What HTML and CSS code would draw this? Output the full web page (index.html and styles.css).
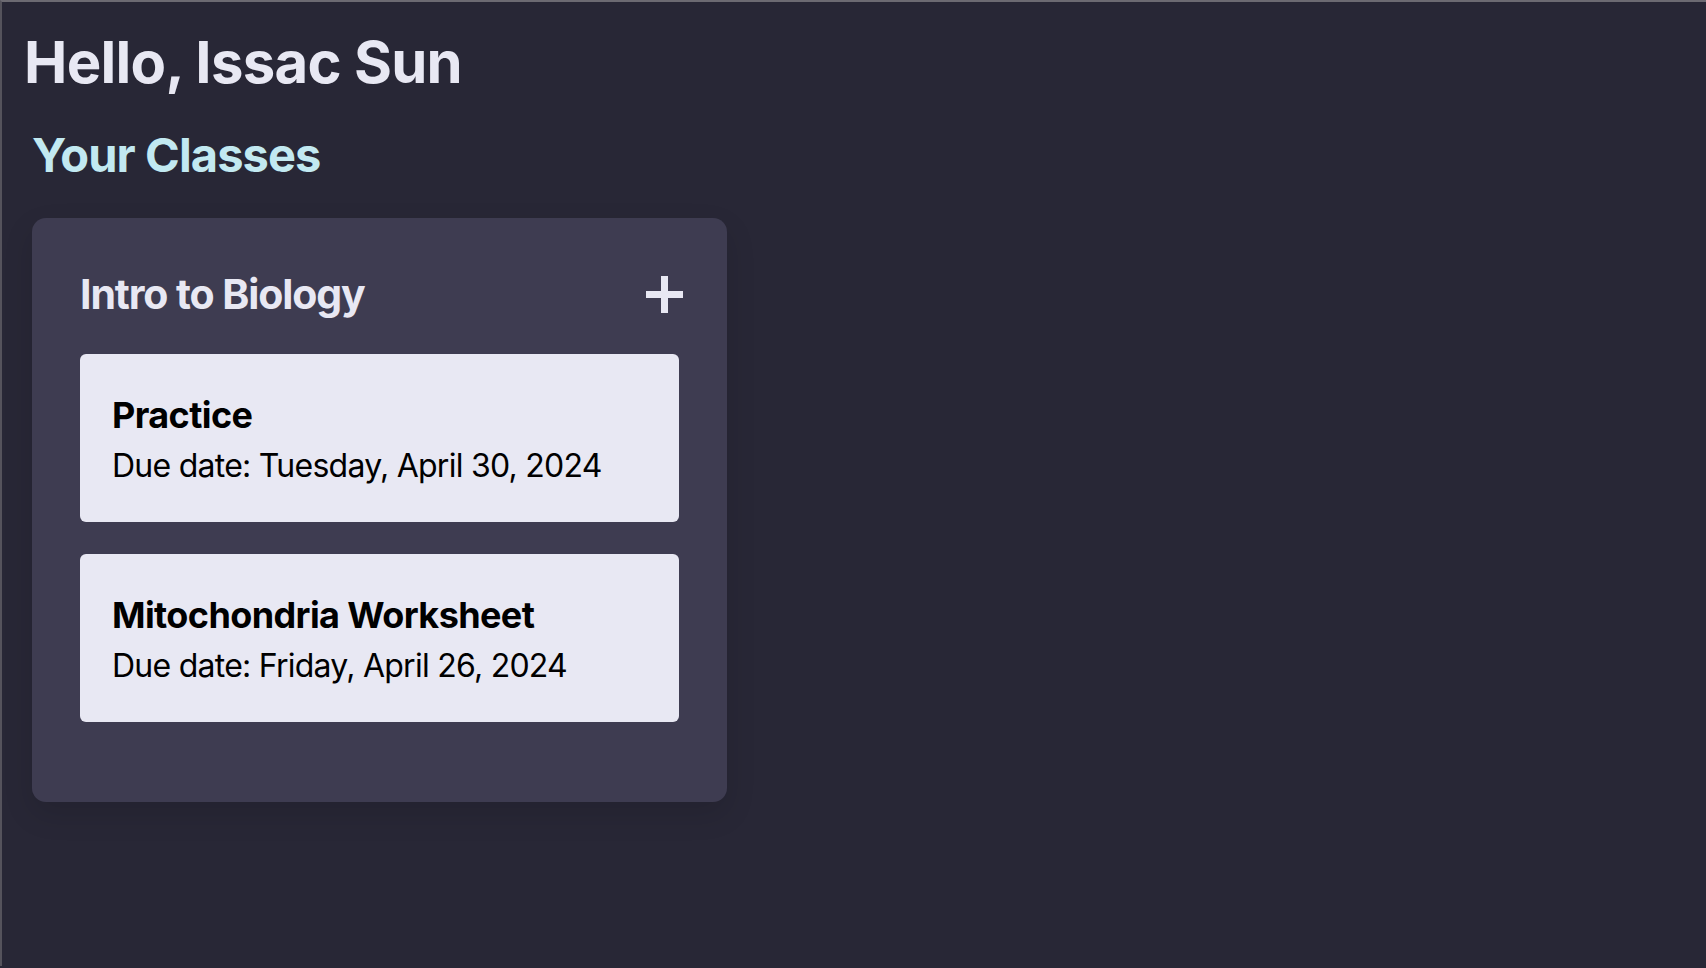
FILE: index.html
```html
<!DOCTYPE html>
<html lang="en">
  <head>
    <meta charset="UTF-8" />
    <meta name="viewport" content="width=device-width, initial-scale=1.0" />
    <title>Dashboard</title>
    <link rel="stylesheet" href="styles.css">
  </head>
  <body>
    <h1 class="greeting">Hello, Issac Sun</h1>

    <div class="classes">
      <h2 class="classes-title">Your Classes</h2>

      <div class="class-card">
        <div class="class-header">
          <h3 class="class-name">Intro to Biology</h3>
          <button type="button" class="add-button" aria-label="Add assignment">
            <svg width="37" height="37" viewBox="0 0 37 37">
              <rect x="15" y="0" width="7" height="37" fill="currentColor" />
              <rect x="0" y="15" width="37" height="7" fill="currentColor" />
            </svg>
          </button>
        </div>

        <div class="assignment">
          <h4 class="assignment-name">Practice</h4>
          <p class="due-date">Due date: Tuesday, April 30, 2024</p>
        </div>

        <div class="assignment">
          <h4 class="assignment-name">Mitochondria Worksheet</h4>
          <p class="due-date">Due date: Friday, April 26, 2024</p>
        </div>
      </div>
    </div>
  </body>
</html>
```

FILE: styles.css
```css
html {
  background-color: #282736;
}
body {
  margin: 0;
  min-height: 966px;
  background-color: #282736;
  border-top: 2px solid #6c6a72;
  border-left: 2px solid #55535c;
  font-family: Inter, "Noto Sans", sans-serif;
  color: #e8e8f3;
  box-sizing: border-box;
}
.greeting {
  margin: 25px 0 0 22px;
  font-size: 58px;
  font-weight: 700;
  letter-spacing: -0.7px;
  line-height: normal;
}
.classes {
  padding-left: 30px;
}
.classes-title {
  margin: 29px 0 35px 0;
  font-size: 47px;
  font-weight: 700;
  letter-spacing: -0.9px;
  line-height: normal;
  color: #c2e9f1;
}
.class-card {
  width: 695px;
  box-sizing: border-box;
  padding: 51px 48px 80px 48px;
  background-color: #3e3c51;
  border-radius: 14px;
  box-shadow: 0 12px 30px rgba(0, 0, 0, 0.12);
}
.class-header {
  display: flex;
  align-items: center;
  justify-content: space-between;
  margin-bottom: 35px;
}
.class-name {
  margin: 0;
  font-size: 41px;
  font-weight: 700;
  letter-spacing: -1.1px;
  line-height: normal;
}
.add-button {
  display: flex;
  padding: 0;
  margin-right: -4px;
  border: none;
  background: none;
  color: #e8e8f3;
  cursor: pointer;
}
.assignment {
  padding: 39px 30px 36px 32px;
  margin-bottom: 32px;
  background-color: #e8e8f3;
  border-radius: 6px;
  color: #000;
}
.assignment:last-child {
  margin-bottom: 0;
}
.assignment-name {
  margin: 0 0 9px 0;
  font-size: 36px;
  font-weight: 700;
  letter-spacing: -0.6px;
  line-height: normal;
}
.due-date {
  margin: 0;
  font-size: 32px;
  font-weight: 400;
  letter-spacing: -0.75px;
  line-height: 40px;
}
```
